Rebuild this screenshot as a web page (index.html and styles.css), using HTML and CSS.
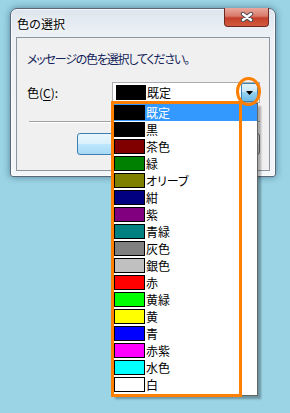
FILE: index.html
```html
<!DOCTYPE html>
<html lang="ja">
<head>
    <meta charset="UTF-8">
    <title>色の選択</title>
    <link rel="stylesheet" href="styles.css">
</head>
<body>
    <div class="window">
        <div class="titlebar">
            <span class="title">色の選択</span>
            <div class="close-btn">
                <svg width="14" height="10" viewBox="0 0 14 10">
                    <path d="M3 2 L11 8 M11 2 L3 8" stroke="#4b4b55" stroke-width="4.4" stroke-linecap="round"/>
                    <path d="M3 2 L11 8 M11 2 L3 8" stroke="#ffffff" stroke-width="2.4" stroke-linecap="round"/>
                </svg>
            </div>
        </div>
        <div class="client">
            <p class="message">メッセージの色を選択してください。</p>
            <div class="field">
                <label class="label">色(<u>C</u>):</label>
                <div class="combo">
                    <span class="swatch swatch-plain"></span>
                    <span class="combo-text">既定</span>
                    <span class="arrow-btn">
                        <svg width="7" height="4" viewBox="0 0 7 4"><path d="M0 0 H7 L3.5 4 Z" fill="#000"/></svg>
                    </span>
                </div>
            </div>
            <div class="separator"></div>
            <div class="buttons">
                <button class="btn btn-default">OK</button>
                <button class="btn">キャンセル</button>
            </div>
        </div>
    </div>

    <ul class="dropdown">
        <li class="item selected"><span class="swatch" style="background:#000000"></span>既定</li>
        <li class="item"><span class="swatch" style="background:#000000"></span>黒</li>
        <li class="item"><span class="swatch" style="background:#800000"></span>茶色</li>
        <li class="item"><span class="swatch" style="background:#008000"></span>緑</li>
        <li class="item"><span class="swatch" style="background:#808000"></span>オリーブ</li>
        <li class="item"><span class="swatch" style="background:#000080"></span>紺</li>
        <li class="item"><span class="swatch" style="background:#800080"></span>紫</li>
        <li class="item"><span class="swatch" style="background:#008080"></span>青緑</li>
        <li class="item"><span class="swatch" style="background:#808080"></span>灰色</li>
        <li class="item"><span class="swatch" style="background:#c0c0c0"></span>銀色</li>
        <li class="item"><span class="swatch" style="background:#ff0000"></span>赤</li>
        <li class="item"><span class="swatch" style="background:#00ff00"></span>黄緑</li>
        <li class="item"><span class="swatch" style="background:#ffff00"></span>黄</li>
        <li class="item"><span class="swatch" style="background:#0000ff"></span>青</li>
        <li class="item"><span class="swatch" style="background:#ff00ff"></span>赤紫</li>
        <li class="item"><span class="swatch" style="background:#00ffff"></span>水色</li>
        <li class="item"><span class="swatch" style="background:#ffffff"></span>白</li>
    </ul>

    <svg class="annotation" width="290" height="413" viewBox="0 0 290 413">
        <rect x="112.5" y="102.5" width="128" height="293" fill="none" stroke="#ff7f00" stroke-width="3"/>
        <ellipse cx="248.5" cy="91.5" rx="11" ry="13" fill="none" stroke="#ff7f00" stroke-width="3"/>
    </svg>
</body>
</html>
```

FILE: styles.css
```css
body {
    margin: 0;
    width: 290px;
    height: 413px;
    position: relative;
    overflow: hidden;
    background: #9ad4e5;
    font-family: "Noto Sans CJK JP", sans-serif;
    font-size: 12px;
    color: #000;
}

.window {
    margin: 8px 0 0 10px;
    width: 266px;
    height: 169px;
    box-sizing: border-box;
    border: 1px solid #5b6878;
    border-radius: 7px 7px 3px 3px;
    padding: 0 5px 5px;
    display: flex;
    flex-direction: column;
    background: linear-gradient(to bottom, #dde5ee, #eef2f6 30px, #f3f6f9);
    box-shadow: 0 0 7px rgba(0, 30, 60, 0.45), inset 0 0 0 1px rgba(255, 255, 255, 0.7);
}

.titlebar {
    height: 28px;
    display: flex;
    align-items: center;
}

.title {
    padding-left: 1px;
    padding-top: 1px;
    text-shadow: 0 0 6px #fff, 0 0 3px #fff;
}

.close-btn {
    margin-left: auto;
    margin-right: 1px;
    align-self: flex-start;
    margin-top: -1px;
    width: 45px;
    height: 19px;
    box-sizing: border-box;
    border: 1px solid #6e2a22;
    border-top: none;
    border-radius: 0 0 4px 4px;
    background: linear-gradient(to bottom, #eaa79d, #d97a6a 45%, #c4402b 55%, #d25b3e);
    display: flex;
    align-items: center;
    justify-content: center;
}

.client {
    flex: 1;
    border: 1px solid #8c96a0;
    background: #f0f0f0;
    padding: 13px 9px 0 10px;
}

.message {
    margin: 0;
    line-height: 16px;
    color: #14245a;
    letter-spacing: -1.2px;
    font-feature-settings: "palt";
}

.field {
    margin-top: 15px;
    display: flex;
    align-items: center;
}

.label {
    width: 85px;
}

.label u {
    text-underline-offset: 2px;
}

.combo {
    width: 148px;
    height: 21px;
    box-sizing: border-box;
    border: 1px solid #abadb3;
    background: #fff;
    display: flex;
    align-items: center;
    padding-left: 3px;
}

.swatch {
    width: 31px;
    height: 15px;
    box-sizing: border-box;
    border: 1px solid #000;
    flex-shrink: 0;
}

.swatch-plain {
    width: 30px;
    background: #000;
}

.combo-text {
    margin-left: 1px;
    line-height: 17px;
}

.arrow-btn {
    margin-left: auto;
    margin-right: 1px;
    width: 17px;
    height: 19px;
    box-sizing: border-box;
    border: 1px solid #3c7fb1;
    border-radius: 2px;
    background: linear-gradient(to bottom, #e5f4fc, #c4e5f6 50%, #98d1ef 50%, #6dbde8);
    display: flex;
    align-items: center;
    justify-content: center;
}

.separator {
    margin: 18px 0 0 2px;
    height: 1px;
    background: #a0a0a0;
    border-bottom: 1px solid #fff;
}

.buttons {
    margin-top: 10px;
    display: flex;
    justify-content: flex-end;
    gap: 7px;
}

.btn {
    width: 88px;
    height: 22px;
    border: 1px solid #707070;
    border-radius: 3px;
    background: linear-gradient(to bottom, #f2f2f2, #ebebeb 50%, #dddddd 50%, #cfcfcf);
    font-family: inherit;
    font-size: 12px;
}

.btn-default {
    border-color: #3c7fb1;
    background: linear-gradient(to bottom, #eaf6fd, #d9f0fc 50%, #bee6fd 50%, #a7d9f5);
}

.dropdown {
    position: absolute;
    left: 112px;
    top: 103px;
    width: 146px;
    height: 293px;
    box-sizing: border-box;
    margin: 0;
    padding: 0;
    list-style: none;
    border: 1px solid #646464;
    background: #fff;
    box-shadow: 3px 3px 2px rgba(0, 0, 0, 0.3);
}

.item {
    height: 17px;
    display: flex;
    align-items: center;
    gap: 1px;
    padding-left: 1px;
    line-height: 17px;
    font-feature-settings: "palt";
}

.item.selected {
    background: #3399ff;
    color: #fff;
}

.annotation {
    position: absolute;
    left: 0;
    top: 0;
    pointer-events: none;
}
```
